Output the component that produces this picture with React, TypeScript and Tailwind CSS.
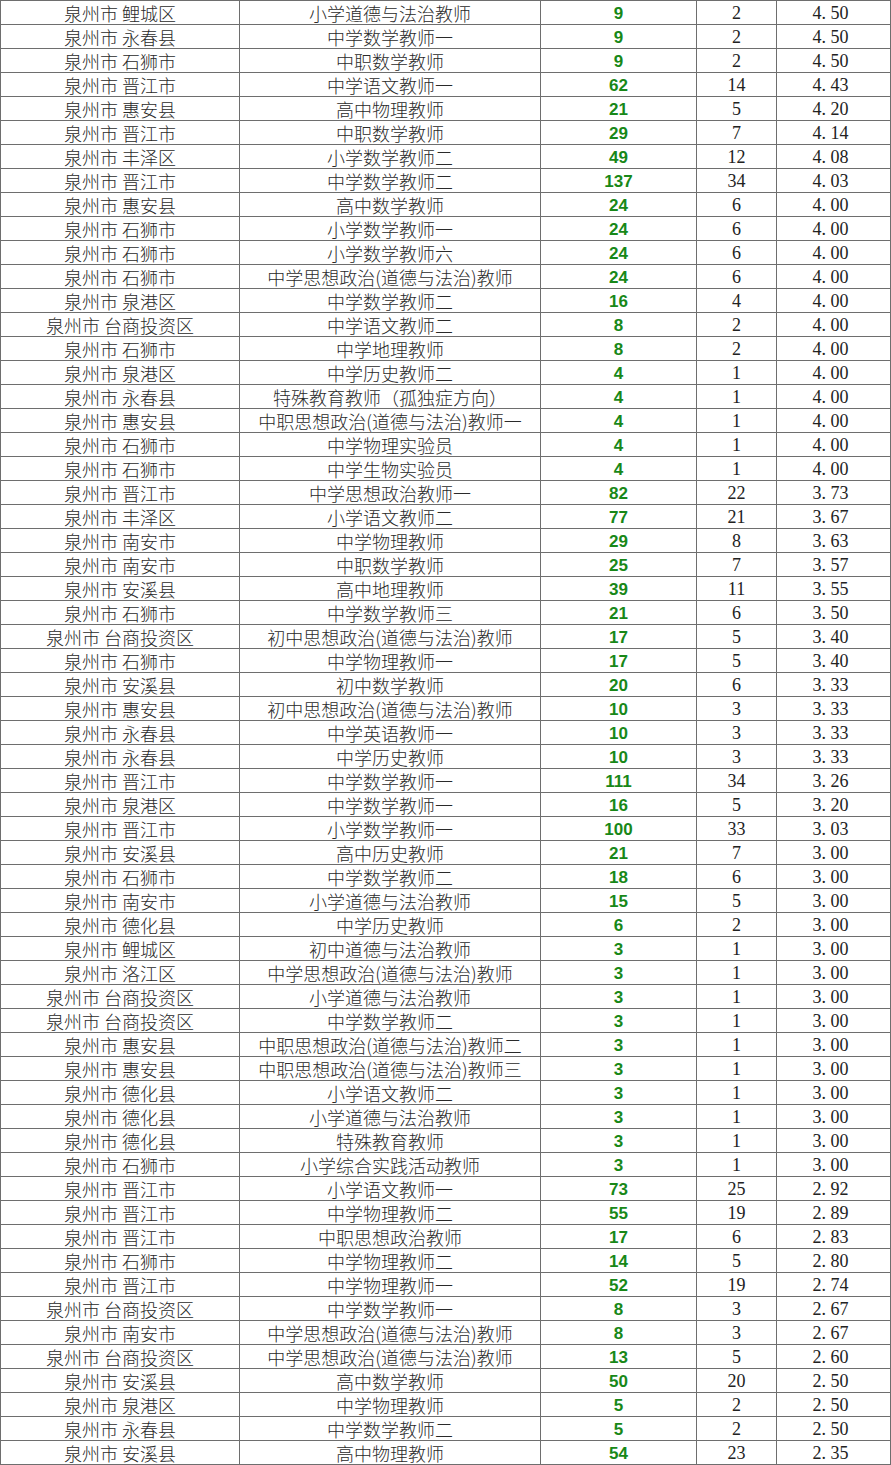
import React from "react";

type Row = [string, string, number, number, string];

const rows: Row[] = [
  ["泉州市 鲤城区", "小学道德与法治教师", 9, 2, "4.50"],
  ["泉州市 永春县", "中学数学教师一", 9, 2, "4.50"],
  ["泉州市 石狮市", "中职数学教师", 9, 2, "4.50"],
  ["泉州市 晋江市", "中学语文教师一", 62, 14, "4.43"],
  ["泉州市 惠安县", "高中物理教师", 21, 5, "4.20"],
  ["泉州市 晋江市", "中职数学教师", 29, 7, "4.14"],
  ["泉州市 丰泽区", "小学数学教师二", 49, 12, "4.08"],
  ["泉州市 晋江市", "中学数学教师二", 137, 34, "4.03"],
  ["泉州市 惠安县", "高中数学教师", 24, 6, "4.00"],
  ["泉州市 石狮市", "小学数学教师一", 24, 6, "4.00"],
  ["泉州市 石狮市", "小学数学教师六", 24, 6, "4.00"],
  ["泉州市 石狮市", "中学思想政治(道德与法治)教师", 24, 6, "4.00"],
  ["泉州市 泉港区", "中学数学教师二", 16, 4, "4.00"],
  ["泉州市 台商投资区", "中学语文教师二", 8, 2, "4.00"],
  ["泉州市 石狮市", "中学地理教师", 8, 2, "4.00"],
  ["泉州市 泉港区", "中学历史教师二", 4, 1, "4.00"],
  ["泉州市 永春县", "特殊教育教师（孤独症方向）", 4, 1, "4.00"],
  ["泉州市 惠安县", "中职思想政治(道德与法治)教师一", 4, 1, "4.00"],
  ["泉州市 石狮市", "中学物理实验员", 4, 1, "4.00"],
  ["泉州市 石狮市", "中学生物实验员", 4, 1, "4.00"],
  ["泉州市 晋江市", "中学思想政治教师一", 82, 22, "3.73"],
  ["泉州市 丰泽区", "小学语文教师二", 77, 21, "3.67"],
  ["泉州市 南安市", "中学物理教师", 29, 8, "3.63"],
  ["泉州市 南安市", "中职数学教师", 25, 7, "3.57"],
  ["泉州市 安溪县", "高中地理教师", 39, 11, "3.55"],
  ["泉州市 石狮市", "中学数学教师三", 21, 6, "3.50"],
  ["泉州市 台商投资区", "初中思想政治(道德与法治)教师", 17, 5, "3.40"],
  ["泉州市 石狮市", "中学物理教师一", 17, 5, "3.40"],
  ["泉州市 安溪县", "初中数学教师", 20, 6, "3.33"],
  ["泉州市 惠安县", "初中思想政治(道德与法治)教师", 10, 3, "3.33"],
  ["泉州市 永春县", "中学英语教师一", 10, 3, "3.33"],
  ["泉州市 永春县", "中学历史教师", 10, 3, "3.33"],
  ["泉州市 晋江市", "中学数学教师一", 111, 34, "3.26"],
  ["泉州市 泉港区", "中学数学教师一", 16, 5, "3.20"],
  ["泉州市 晋江市", "小学数学教师一", 100, 33, "3.03"],
  ["泉州市 安溪县", "高中历史教师", 21, 7, "3.00"],
  ["泉州市 石狮市", "中学数学教师二", 18, 6, "3.00"],
  ["泉州市 南安市", "小学道德与法治教师", 15, 5, "3.00"],
  ["泉州市 德化县", "中学历史教师", 6, 2, "3.00"],
  ["泉州市 鲤城区", "初中道德与法治教师", 3, 1, "3.00"],
  ["泉州市 洛江区", "中学思想政治(道德与法治)教师", 3, 1, "3.00"],
  ["泉州市 台商投资区", "小学道德与法治教师", 3, 1, "3.00"],
  ["泉州市 台商投资区", "中学数学教师二", 3, 1, "3.00"],
  ["泉州市 惠安县", "中职思想政治(道德与法治)教师二", 3, 1, "3.00"],
  ["泉州市 惠安县", "中职思想政治(道德与法治)教师三", 3, 1, "3.00"],
  ["泉州市 德化县", "小学语文教师二", 3, 1, "3.00"],
  ["泉州市 德化县", "小学道德与法治教师", 3, 1, "3.00"],
  ["泉州市 德化县", "特殊教育教师", 3, 1, "3.00"],
  ["泉州市 石狮市", "小学综合实践活动教师", 3, 1, "3.00"],
  ["泉州市 晋江市", "小学语文教师一", 73, 25, "2.92"],
  ["泉州市 晋江市", "中学物理教师二", 55, 19, "2.89"],
  ["泉州市 晋江市", "中职思想政治教师", 17, 6, "2.83"],
  ["泉州市 石狮市", "中学物理教师二", 14, 5, "2.80"],
  ["泉州市 晋江市", "中学物理教师一", 52, 19, "2.74"],
  ["泉州市 台商投资区", "中学数学教师一", 8, 3, "2.67"],
  ["泉州市 南安市", "中学思想政治(道德与法治)教师", 8, 3, "2.67"],
  ["泉州市 台商投资区", "中学思想政治(道德与法治)教师", 13, 5, "2.60"],
  ["泉州市 安溪县", "高中数学教师", 50, 20, "2.50"],
  ["泉州市 泉港区", "中学物理教师", 5, 2, "2.50"],
  ["泉州市 永春县", "中学数学教师二", 5, 2, "2.50"],
  ["泉州市 安溪县", "高中物理教师", 54, 23, "2.35"],
];

const cell =
  "h-6 border-r border-b border-[#6e6e6e] flex items-center justify-center whitespace-nowrap";
const cjk =
  "font-['Noto_Sans_CJK_SC',sans-serif] text-[18px] leading-[18px] text-[#2a2a2a] font-light";
const serifNum =
  "font-['Liberation_Serif',serif] text-[18px] leading-[18px] text-[#222]";

function Ratio({ v }: { v: string }) {
  const [a, b] = v.split(".");
  return (
    <span className={serifNum}>
      {a}
      <span className="inline-block w-[9px] text-left">.</span>
      {b}
    </span>
  );
}

export default function App() {
  return (
    <div className="w-[891px] bg-white">
      <div className="grid grid-cols-[239px_301px_156px_80px_114px] border-l border-t border-[#6e6e6e]">
        {rows.map((r, i) => (
          <React.Fragment key={i}>
            <div className={cell}>
              <span className={cjk + " mt-[1px]"}>{r[0]}</span>
            </div>
            <div className={cell}>
              <span className={cjk + " mt-[1px]"}>{r[1]}</span>
            </div>
            <div className={cell}>
              <span className="font-['Liberation_Sans',sans-serif] font-bold text-[17px] leading-[17px] text-[#188818] mt-[1px]">
                {r[2]}
              </span>
            </div>
            <div className={cell}>
              <span className={serifNum + " mt-[1px]"}>{r[3]}</span>
            </div>
            <div className={cell + " pr-[6px]"}>
              <span className="mt-[1px]">
                <Ratio v={r[4]} />
              </span>
            </div>
          </React.Fragment>
        ))}
      </div>
    </div>
  );
}
